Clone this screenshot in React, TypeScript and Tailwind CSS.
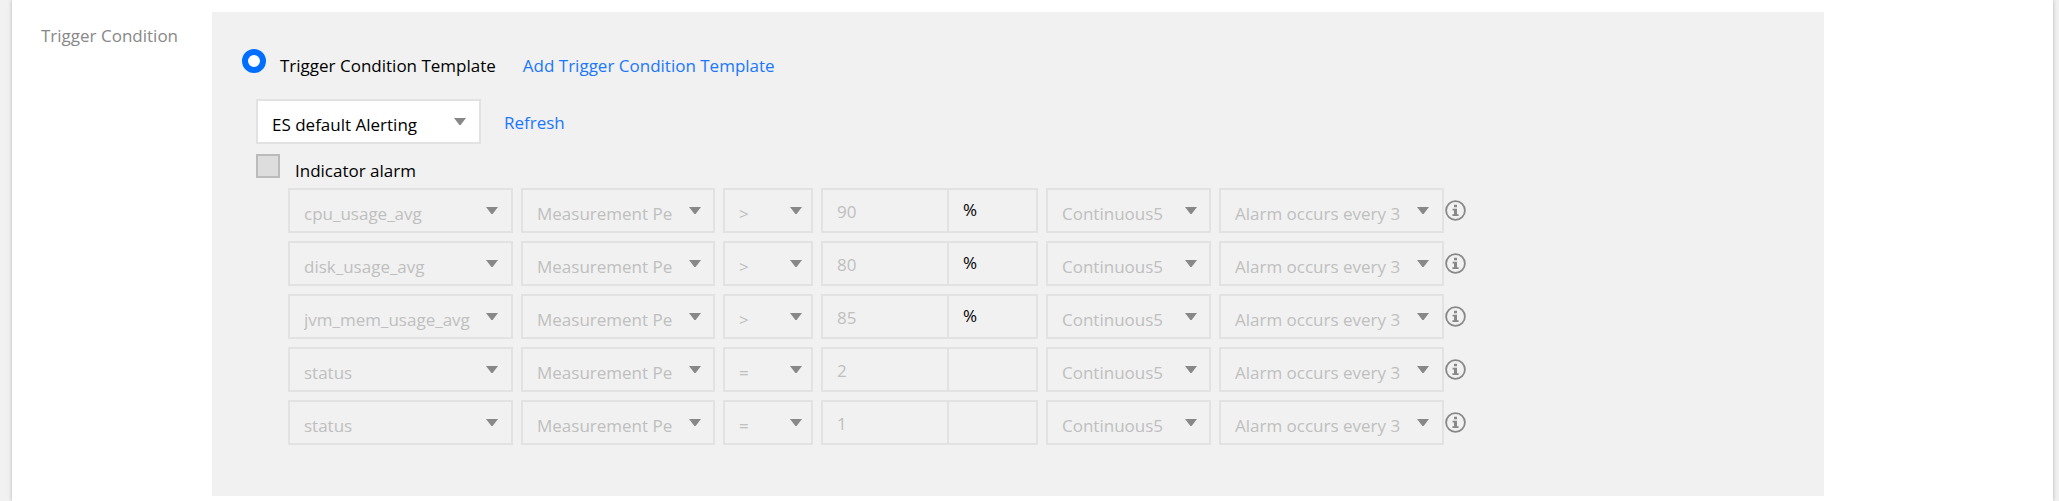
import { useState } from "react";

interface Rule {
  metric: string;
  operator: string;
  value: string;
  unit: string;
}

interface SelectBoxProps {
  label: string;
  value: string;
  className: string;
  arrowClassName?: string;
  disabled?: boolean;
}

const rules: Rule[] = [
  { metric: "cpu_usage_avg", operator: ">", value: "90", unit: "%" },
  { metric: "disk_usage_avg", operator: ">", value: "80", unit: "%" },
  { metric: "jvm_mem_usage_avg", operator: ">", value: "85", unit: "%" },
  { metric: "status", operator: "=", value: "2", unit: "" },
  { metric: "status", operator: "=", value: "1", unit: "" },
];

function SelectBox({ label, value, className, arrowClassName = "right-[15px]", disabled }: SelectBoxProps) {
  return (
    <div className={`relative h-[45px] shrink-0 ${className}`}>
      <select
        aria-label={label}
        disabled={disabled}
        defaultValue={value}
        className="h-full w-full appearance-none rounded-none border-2 border-[#e2e2e2] bg-white pt-1.5 pr-10 pl-3.5 text-black opacity-100 disabled:bg-transparent disabled:text-[#bfbfbf] disabled:opacity-100"
      >
        <option>{value}</option>
      </select>
      <svg
        className={`pointer-events-none absolute top-[19px] h-[7px] w-3 ${arrowClassName}`}
        viewBox="0 0 12 7"
        fill="#888"
      >
        <path d="M0 0h12L6.6 7H5.4z" />
      </svg>
    </div>
  );
}

function InfoIcon() {
  return (
    <svg className="ml-px h-[21px] w-[21px] shrink-0" viewBox="0 0 21 21" fill="none">
      <circle cx="10.5" cy="10.5" r="9.4" stroke="#888" strokeWidth="1.8" />
      <path d="M9 4.8h3v2.5H9zM7.6 8.8H12v5.4h1.6v1.7H7.4v-1.7H9v-3.7H7.6z" fill="#888" />
    </svg>
  );
}

function RuleRow({ rule }: { rule: Rule }) {
  return (
    <div className="flex items-center">
      <div className="flex gap-2">
        <SelectBox label="Metric" value={rule.metric} className="w-[225px]" disabled />
        <SelectBox label="Period" value="Measurement Period" className="w-[194px]" arrowClassName="right-3.5" disabled />
        <SelectBox label="Operator" value={rule.operator} className="w-[90px]" arrowClassName="right-[11px]" disabled />
        <div className="flex h-[45px] w-[217px] shrink-0 border-2 border-[#e2e2e2]">
          <input
            aria-label="Threshold"
            defaultValue={rule.value}
            disabled
            className="w-[126px] border-r-2 border-[#e2e2e2] pt-0.5 pl-3.5 text-[#bfbfbf]"
          />
          <span className="pl-3.5 leading-10">{rule.unit}</span>
        </div>
        <SelectBox label="Duration" value="Continuous5" className="w-[165px]" arrowClassName="right-3.5" disabled />
        <SelectBox label="Frequency" value="Alarm occurs every 3" className="w-[225px]" disabled />
      </div>
      <InfoIcon />
    </div>
  );
}

export default function App() {
  const [template, setTemplate] = useState(true);

  return (
    <div className="min-h-screen bg-[#f1f1f1] pr-1.5 pl-3 font-['Open_Sans',sans-serif] text-[17px] leading-6 text-black">
      <div className="flex min-h-screen bg-white pt-3 pl-[29px] shadow-[0_0_4px_rgba(0,0,0,0.25)]">
        <div className="w-[171px] shrink-0 pt-3 text-[#888]">Trigger Condition</div>

        <section className="max-w-[1612px] flex-1 self-start bg-[#f1f1f1] pt-[37px] pb-[51px] pl-[30px]">
          <div className="flex items-start">
            <input
              id="template"
              type="radio"
              name="condition"
              checked={template}
              onChange={() => setTemplate(true)}
              className="h-6 w-6 appearance-none rounded-full border-[6px] border-[#006eff] bg-white"
            />
            <label htmlFor="template" className="mt-[5px] ml-3.5">
              Trigger Condition Template
            </label>
            <a href="#add" className="mt-[5px] ml-[27px] text-[#1a77ff]">
              Add Trigger Condition Template
            </a>
          </div>

          <div className="mt-[21px] flex items-center pl-3.5">
            <SelectBox label="Template" value="ES default Alerting" className="w-[225px]" />
            <a href="#refresh" className="ml-[23px] pt-0.5 text-[#1a77ff]">
              Refresh
            </a>
          </div>

          <div className="mt-2.5 flex items-start pl-3.5">
            <input
              id="indicator"
              type="checkbox"
              disabled
              className="h-6 w-6 appearance-none border-2 border-[#bbb] bg-[#ddd]"
            />
            <label htmlFor="indicator" className="mt-[5px] ml-[15px]">
              Indicator alarm
            </label>
          </div>

          <div className="mt-[5px] flex flex-col gap-2 pl-[46px]">
            {rules.map((rule, i) => (
              <RuleRow key={i} rule={rule} />
            ))}
          </div>
        </section>
      </div>
    </div>
  );
}
